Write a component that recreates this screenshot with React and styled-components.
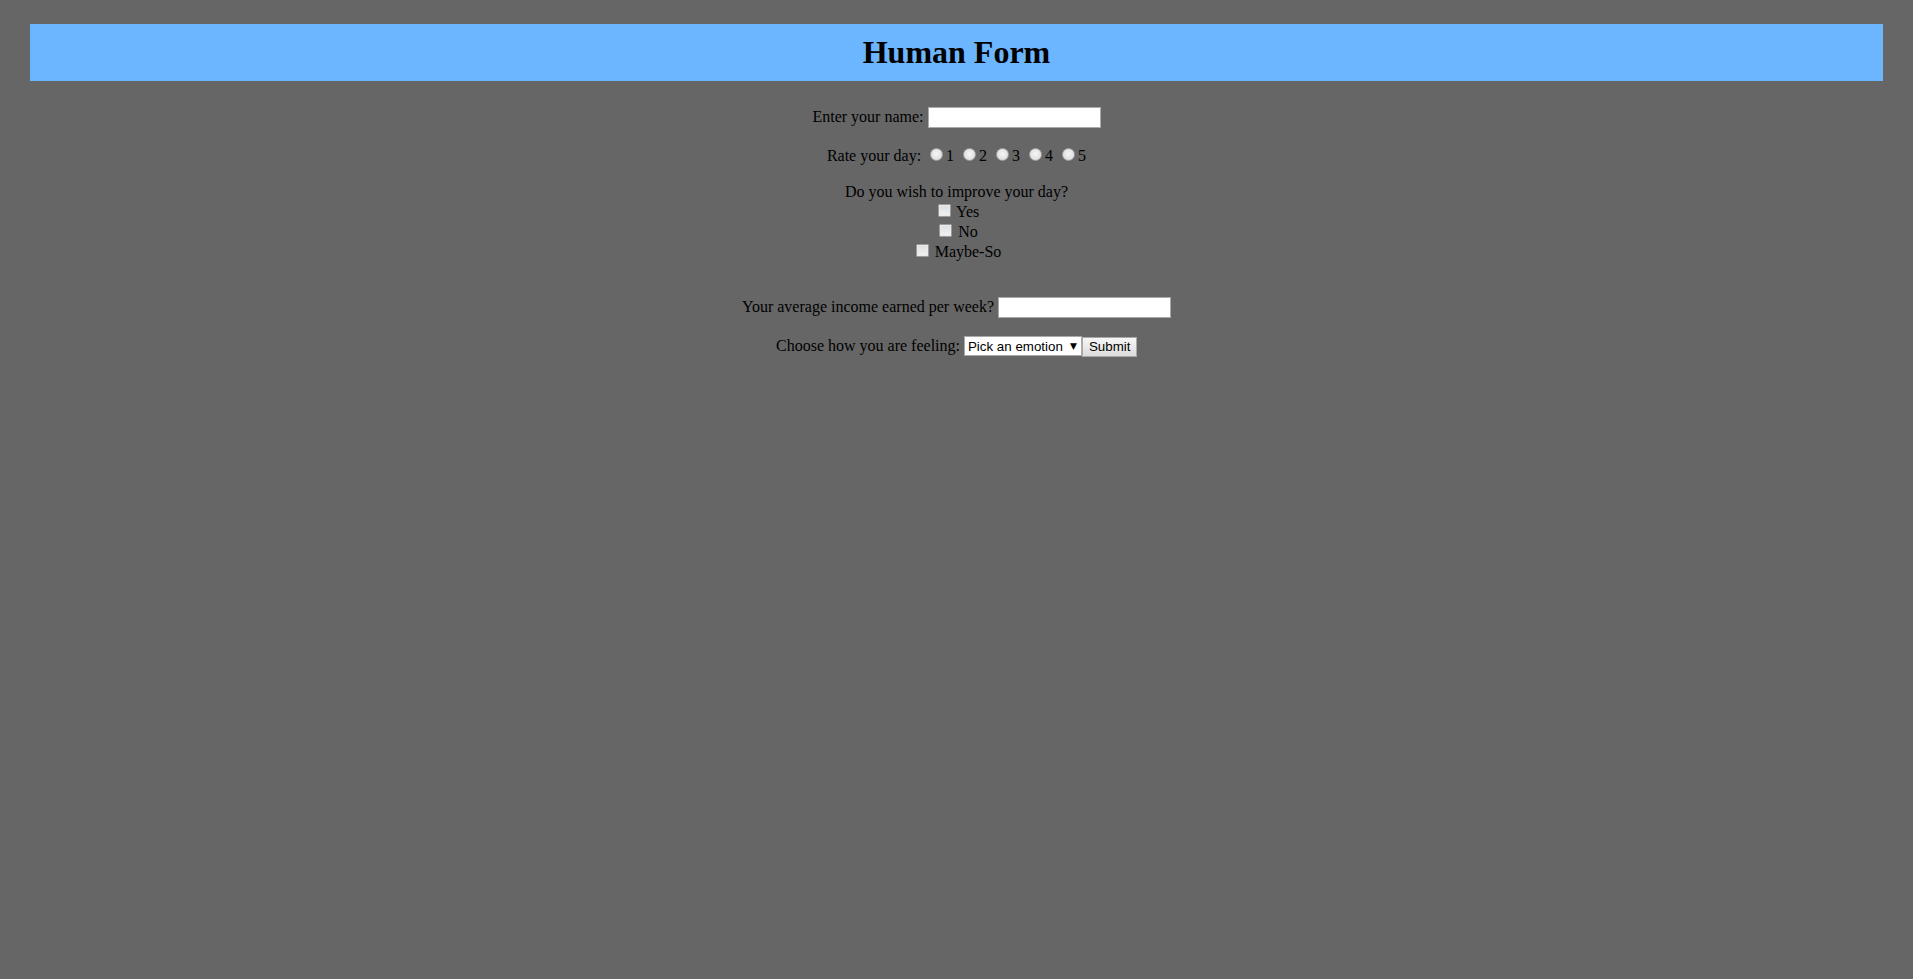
import React from 'react'
import styled, { createGlobalStyle } from 'styled-components'

const GlobalStyle = createGlobalStyle`
html, body {
    margin:0;
    padding:0;
    background-color:#666666;
}
body {
    font-family:"Liberation Serif", "Times New Roman", serif;
    font-size:16px;
    color:#000;
}
`;

const Page = styled.div`
padding:24px 30px;
min-height:100vh;
box-sizing:border-box;
`;
const Header = styled.h1`
margin:0;
padding:10px 0px;
background-color:#6cb5ff;
text-align:center;
font-size:32px;
font-weight:700;
line-height:37px;
`;
const Form = styled.form`
text-align:center;
line-height:normal;
`;
const Row = styled.div`
margin-top:${props=>props.$top}px;
`;
const TextInput = styled.input`
box-sizing:border-box;
width:173px;
height:21px;
padding:1px 2px;
border:1px solid #a9a9a9;
background-color:#fff;
font-family:Arial, "Liberation Sans", sans-serif;
font-size:13.33px;
vertical-align:baseline;
outline:none;
`;
const Radio = styled.input`
appearance:none;
-webkit-appearance:none;
width:13px;
height:13px;
margin:3px 3px 0px 5px;
border:1px solid #a3a3a3;
border-radius:50%;
box-sizing:border-box;
background:radial-gradient(circle at 50% 45%, #f6f6f6 0%, #e4e4e4 55%, #cfcfcf 100%);
vertical-align:baseline;
`;
const Check = styled.input`
appearance:none;
-webkit-appearance:none;
width:13px;
height:13px;
margin:3px 2px 0px 4px;
border:1px solid #9b9b9b;
border-radius:1px;
box-sizing:border-box;
background:linear-gradient(#dedede, #f2f2f2);
box-shadow:inset 0 0 0 1px #e9e9e9;
vertical-align:baseline;
`;
const SelectWrap = styled.span`
position:relative;
display:inline-block;
vertical-align:baseline;
`;
const Select = styled.select`
appearance:none;
-webkit-appearance:none;
box-sizing:border-box;
width:118px;
height:20px;
margin:0;
padding:2px 18px 1px 3px;
border:1px solid #a9a9a9;
border-radius:0;
background-color:#fff;
font-family:Arial, "Liberation Sans", sans-serif;
font-size:13.33px;
color:#000;
outline:none;
`;
const Arrow = styled.span`
position:absolute;
right:5px;
top:5px;
font-family:"DejaVu Sans", Arial, sans-serif;
font-size:9px;
line-height:10px;
pointer-events:none;
`;
const Button = styled.button`
box-sizing:border-box;
width:55px;
height:20px;
margin:0;
padding:1px 6px;
border:1px solid #a9a9a9;
border-radius:0;
background:linear-gradient(#f6f6f6, #dddddd);
font-family:Arial, "Liberation Sans", sans-serif;
font-size:13.33px;
color:#000;
vertical-align:baseline;
cursor:pointer;
`;

const App = () => {
    return (
        <Page>
            <GlobalStyle/>
            <Header>Human Form</Header>
            <Form onSubmit={e=>e.preventDefault()}>
                <Row $top={26}>
                    Enter your name: <TextInput type="text" name="name"/>
                </Row>
                <Row $top={17}>
                    Rate your day: <Radio type="radio" name="rate"/>1 <Radio type="radio" name="rate"/>2 <Radio type="radio" name="rate"/>3 <Radio type="radio" name="rate"/>4 <Radio type="radio" name="rate"/>5
                </Row>
                <Row $top={18}>
                    Do you wish to improve your day?
                    <br/>
                    <Check type="checkbox"/> Yes
                    <br/>
                    <Check type="checkbox"/> No
                    <br/>
                    <Check type="checkbox"/> Maybe-So
                </Row>
                <Row $top={36}>
                    Your average income earned per week? <TextInput type="text" name="income"/>
                </Row>
                <Row $top={18}>
                    Choose how you are feeling: <SelectWrap>
                        <Select defaultValue="">
                            <option value="">Pick an emotion</option>
                            <option>Happy</option>
                            <option>Sad</option>
                            <option>Angry</option>
                        </Select>
                        <Arrow>▼</Arrow>
                    </SelectWrap><Button type="submit">Submit</Button>
                </Row>
            </Form>
        </Page>
    )
}

export default App
